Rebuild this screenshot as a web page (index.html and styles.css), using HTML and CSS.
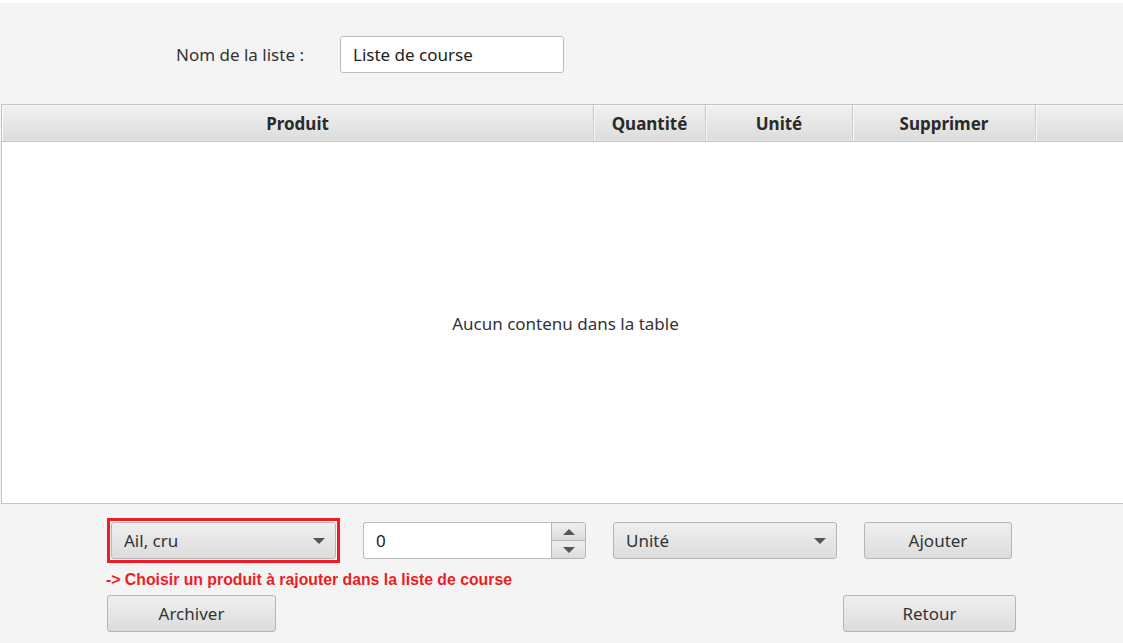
FILE: index.html
```html
<!DOCTYPE html>
<html lang="fr">
<head>
<meta charset="utf-8">
<title>Liste de course</title>
<link rel="stylesheet" href="styles.css">
</head>
<body>
<div class="window">
  <div class="name-row">
    <span class="name-label">Nom de la liste :</span>
    <div class="textfield name-field">Liste de course</div>
  </div>

  <div class="table">
    <div class="thead">
      <div class="th col-prod">Produit</div>
      <div class="th col-qty">Quantité</div>
      <div class="th col-unit">Unité</div>
      <div class="th col-del">Supprimer</div>
      <div class="th col-fill"></div>
    </div>
    <div class="tbody">
      <span class="placeholder">Aucun contenu dans la table</span>
    </div>
  </div>

  <div class="controls">
    <div class="add-row">
      <div class="highlight">
        <div class="combo product-combo">
          <span>Ail, cru</span>
          <span class="arrow"></span>
        </div>
      </div>
      <div class="spinner">
        <div class="spin-field">0</div>
        <div class="spin-buttons">
          <div class="spin-btn"><span class="arrow-up"></span></div>
          <div class="spin-btn"><span class="arrow"></span></div>
        </div>
      </div>
      <div class="combo unit-combo">
        <span>Unité</span>
        <span class="arrow"></span>
      </div>
      <div class="button add-btn">Ajouter</div>
    </div>
    <div class="hint">-&gt; Choisir un produit à rajouter dans la liste de course</div>
    <div class="bottom-row">
      <div class="button archive-btn">Archiver</div>
      <div class="button back-btn">Retour</div>
    </div>
  </div>
</div>
</body>
</html>
```

FILE: styles.css
```css
html, body {
  margin: 0;
  padding: 0;
  background: #f4f4f4;
  overflow: hidden;
}

.window {
  width: 1123px;
  height: 643px;
  box-sizing: border-box;
  border-top: 3px solid #ffffff;
  background: #f4f4f4;
  font-family: "Noto Sans", "Open Sans", sans-serif;
  font-size: 17px;
  color: #333333;
  overflow: hidden;
}

.name-row {
  display: flex;
  align-items: center;
  height: 101px;
  padding-left: 176px;
  box-sizing: border-box;
  padding-top: 1px;
}

.name-label {
  width: 164px;
}

.textfield {
  box-sizing: border-box;
  height: 37px;
  background: #ffffff;
  border: 1px solid #bdbdbd;
  border-radius: 3px;
  display: flex;
  align-items: center;
  padding-left: 12px;
}

.name-field {
  width: 224px;
  color: #222222;
}

.table {
  width: 1130px;
  margin-left: 1px;
  border: 1px solid #c4c4c4;
  border-right: none;
  box-sizing: border-box;
}

.thead {
  display: flex;
  height: 37px;
  box-sizing: border-box;
  border-bottom: 1px solid #c4c4c4;
  background: linear-gradient(#f1f1f1, #dcdcdc);
}

.th {
  box-sizing: border-box;
  height: 100%;
  display: flex;
  align-items: center;
  justify-content: center;
  font-weight: bold;
  color: #2a2a2a;
  border-right: 1px solid #cdcdcd;
  box-shadow: inset 1px 1px 0 #f8f8f8, inset -1px -1px 0 #e6e6e6;
}

.col-prod { width: 592px; }
.col-qty { width: 112px; }
.col-unit { width: 147px; }
.col-del { width: 183px; }
.col-fill { flex: 1; border-right: none; }

.tbody {
  height: 361px;
  background: #ffffff;
  display: flex;
  align-items: center;
  justify-content: center;
  padding-right: 2px;
  padding-top: 2px;
  box-sizing: border-box;
}

.placeholder {
  color: #333333;
}

.controls {
  padding-left: 107px;
  padding-top: 14px;
}

.add-row {
  display: flex;
  align-items: center;
}

.highlight {
  box-sizing: border-box;
  width: 233px;
  height: 45px;
  border: 3px solid #ee1c25;
  padding: 1px;
  margin-right: 23px;
}

.combo {
  box-sizing: border-box;
  height: 37px;
  border: 1px solid #b5b5b5;
  border-radius: 3px;
  background: linear-gradient(#efefef, #dcdcdc);
  display: flex;
  align-items: center;
  justify-content: space-between;
  padding: 0 10px 0 12px;
}

.product-combo {
  width: 225px;
  height: 37px;
}

.unit-combo {
  width: 224px;
  margin-right: 27px;
}

.arrow {
  width: 0;
  height: 0;
  border-left: 6px solid transparent;
  border-right: 6px solid transparent;
  border-top: 6px solid #555555;
}

.arrow-up {
  width: 0;
  height: 0;
  border-left: 6px solid transparent;
  border-right: 6px solid transparent;
  border-bottom: 6px solid #555555;
}

.spinner {
  display: flex;
  width: 223px;
  height: 37px;
  margin-right: 27px;
}

.spin-field {
  box-sizing: border-box;
  flex: 1;
  height: 100%;
  background: #ffffff;
  border: 1px solid #bdbdbd;
  border-right: none;
  border-radius: 3px 0 0 3px;
  display: flex;
  align-items: center;
  padding-left: 12px;
  color: #222222;
}

.spin-buttons {
  width: 35px;
  height: 100%;
  display: flex;
  flex-direction: column;
  box-sizing: border-box;
  border: 1px solid #b5b5b5;
  border-radius: 0 3px 3px 0;
  overflow: hidden;
}

.spin-btn {
  flex: 1;
  display: flex;
  align-items: center;
  justify-content: center;
  background: linear-gradient(#efefef, #dcdcdc);
}

.spin-btn + .spin-btn {
  border-top: 1px solid #b5b5b5;
}

.button {
  box-sizing: border-box;
  height: 37px;
  border: 1px solid #b5b5b5;
  border-radius: 3px;
  background: linear-gradient(#efefef, #dcdcdc);
  display: flex;
  align-items: center;
  justify-content: center;
  color: #333333;
}

.add-btn {
  width: 148px;
}

.hint {
  margin-top: 8px;
  margin-left: -1px;
  font-family: "Liberation Sans", Arial, sans-serif;
  font-weight: bold;
  font-size: 15.8px;
  color: #ee1c25;
  line-height: 18px;
}

.bottom-row {
  display: flex;
  justify-content: space-between;
  width: 909px;
  margin-top: 6px;
}

.archive-btn {
  width: 169px;
}

.back-btn {
  width: 173px;
}
```
